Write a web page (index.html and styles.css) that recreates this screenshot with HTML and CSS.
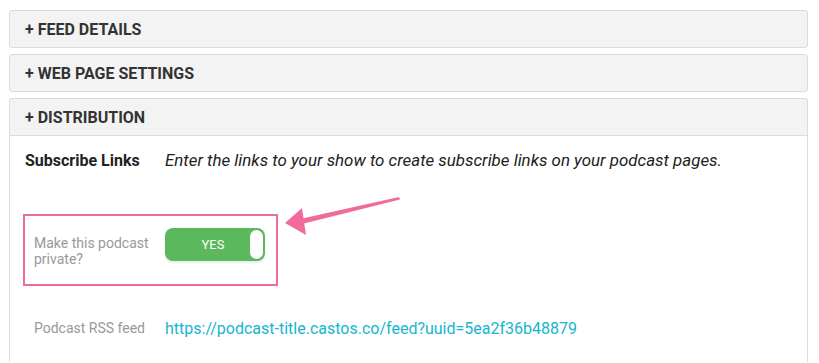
FILE: index.html
```html
<!DOCTYPE html>
<html lang="en">
<head>
  <meta charset="UTF-8" />
  <title>Podcast settings</title>
  <link rel="stylesheet" href="styles.css">
</head>
<body>
  <div class="panel">
    <div class="panel-head">+ FEED DETAILS</div>
  </div>
  <div class="panel">
    <div class="panel-head">+ WEB PAGE SETTINGS</div>
  </div>
  <div class="panel open">
    <div class="panel-head">+ DISTRIBUTION</div>
    <div class="panel-body">
      <div class="row intro">
        <div class="label-strong">Subscribe Links</div>
        <div class="hint">Enter the links to your show to create subscribe links on your podcast pages.</div>
      </div>

      <div class="highlight">
        <div class="label">Make this podcast<br>private?</div>
        <div class="toggle">
          <span>YES</span>
          <div class="knob"></div>
        </div>
      </div>

      <div class="row rss">
        <div class="label">Podcast RSS feed</div>
        <a class="link" href="#">https://podcast-title.castos.co/feed?uuid=5ea2f36b48879</a>
      </div>
    </div>
  </div>

  <!-- annotation arrow -->
  <svg class="arrow" width="130" height="50" viewBox="0 0 130 50">
    <polygon points="119,7 120,9.5 22,34 20,29" fill="#f06b9b" />
    <polygon points="5,33 22,18 26,45" fill="#f06b9b" />
  </svg>
</body>
</html>
```

FILE: styles.css
```css
body {
  margin: 0;
  padding: 10px 11px 0 9px;
  font-family: Roboto, "Liberation Sans", sans-serif;
  background: #fff;
  color: #333;
  position: relative;
  height: 363px;
  overflow: hidden;
  box-sizing: border-box;
}
.panel {
  border: 1px solid #dcdcdc;
  border-radius: 3px;
  background: #f3f3f3;
  margin-bottom: 6px;
}
.panel-head {
  height: 36px;
  line-height: 38px;
  padding-left: 15px;
  font-size: 16px;
  font-weight: 700;
  color: #333;
}
.open {
  border-bottom: none;
  border-radius: 3px 3px 0 0;
}
.open .panel-head {
  border-bottom: 1px solid #dcdcdc;
}
.panel-body {
  background: #fff;
  padding: 14px 15px 0 15px;
  height: 226px;
  box-sizing: border-box;
}
.row {
  display: flex;
  align-items: center;
}
.intro {
  height: 20px;
}
.label-strong {
  width: 140px;
  font-size: 16px;
  font-weight: 700;
  color: #222;
}
.hint {
  font-size: 16.9px;
  font-style: italic;
  color: #222;
}
.highlight {
  display: flex;
  align-items: center;
  width: 251px;
  height: 68px;
  margin: 44px 0 0 -2px;
  border: 2px solid #f06b9b;
}
.label {
  font-size: 14px;
  line-height: 16px;
  color: #999;
}
.highlight .label {
  width: 131px;
  padding-left: 9px;
  margin-top: 1px;
}
.toggle {
  position: relative;
  align-self: flex-start;
  margin-top: 12px;
  width: 100px;
  height: 33px;
  border-radius: 8px;
  background: #5cb85c;
  box-shadow: 0 2px 2px rgba(0, 0, 0, 0.08);
  display: flex;
  align-items: center;
  justify-content: center;
  color: #fff;
  font-size: 13px;
  padding-right: 4px;
  box-sizing: border-box;
}
.knob {
  position: absolute;
  right: 2px;
  top: 2px;
  width: 13px;
  height: 29px;
  border-radius: 7px;
  background: #fff;
}
.rss {
  margin-top: 32px;
  padding-left: 9px;
  height: 20px;
}
.rss .label {
  width: 131px;
}
.link {
  color: #15b6cf;
  font-size: 16px;
  text-decoration: none;
}
.arrow {
  position: absolute;
  left: 280px;
  top: 190px;
}
```
